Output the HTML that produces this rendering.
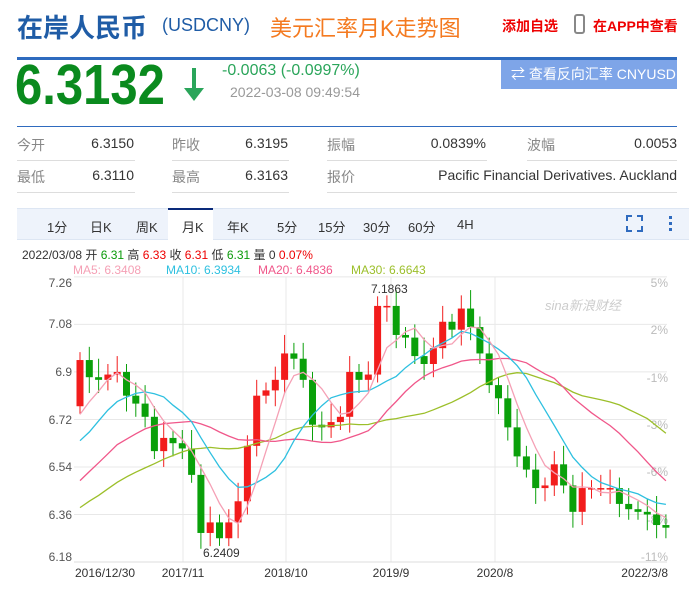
<!DOCTYPE html>
<html><head><meta charset="utf-8">
<style>
*{margin:0;padding:0;box-sizing:border-box}
body{width:689px;height:603px;background:#fff;position:relative;overflow:hidden;font-family:"Liberation Sans","Noto Sans CJK SC",sans-serif}
.a{position:absolute;white-space:nowrap}
.lbl{color:#888;font-size:14px}
.val{color:#333;font-size:14px;text-align:right}
.ul{position:absolute;height:1px;background:#ddd}
.tab{position:absolute;top:217px;font-size:13px;color:#333}
</style></head><body>
<div class="a" style="left:17px;top:8px;font-size:26px;font-weight:bold;color:#1f5ca6">在岸人民币</div>
<div class="a" style="left:162px;top:15px;font-size:18px;color:#1f5ca6">(USDCNY)</div>
<div class="a" style="left:270px;top:11px;font-size:22px;color:#f47a20">美元汇率月K走势图</div>
<div class="a" style="left:502px;top:16px;font-size:14px;font-weight:bold;color:#e00">添加自选</div>
<div class="a" style="left:574px;top:14px;width:11px;height:20px;border:2px solid #888;border-radius:3px"></div>
<div class="a" style="left:593px;top:16px;font-size:14px;font-weight:bold;color:#e00">在APP中查看</div>
<div class="a" style="left:17px;top:57px;width:660px;height:3px;background:#2f6bbf"></div>

<div class="a" style="left:15px;top:52px;font-size:57px;font-weight:bold;color:#0a8a1e;transform:scaleX(0.86);transform-origin:0 0">6.3132</div>
<svg class="a" style="left:182px;top:66px" width="24" height="38"><path d="M12 2V32" stroke="#2aa55a" stroke-width="4"/><path d="M2 22L12 35L22 22Z" fill="#2aa55a"/></svg>
<div class="a" style="left:222px;top:62px;font-size:16px;color:#2aa55a">-0.0063 (-0.0997%)</div>
<div class="a" style="left:230px;top:84px;font-size:14px;color:#999">2022-03-08 09:49:54</div>
<div class="a" style="left:501px;top:60px;width:176px;height:29px;background:#7ea5e8;color:#fff;font-size:14px;line-height:29px;padding-left:10px">⇄ 查看反向汇率 CNYUSD</div>

<div class="a" style="left:17px;top:126px;width:660px;height:1px;background:#2f6bbf"></div>
<div class="a lbl" style="left:17px;top:135px">今开</div><div class="a val" style="left:60px;width:74px;top:135px">6.3150</div>
<div class="a lbl" style="left:172px;top:135px">昨收</div><div class="a val" style="left:214px;width:74px;top:135px">6.3195</div>
<div class="a lbl" style="left:327px;top:135px">振幅</div><div class="a val" style="left:400px;width:86px;top:135px">0.0839%</div>
<div class="a lbl" style="left:527px;top:135px">波幅</div><div class="a val" style="left:600px;width:77px;top:135px">0.0053</div>
<div class="ul" style="left:17px;top:160px;width:118px"></div><div class="ul" style="left:172px;top:160px;width:117px"></div><div class="ul" style="left:327px;top:160px;width:160px"></div><div class="ul" style="left:527px;top:160px;width:150px"></div>
<div class="a lbl" style="left:17px;top:167px">最低</div><div class="a val" style="left:60px;width:74px;top:167px">6.3110</div>
<div class="a lbl" style="left:172px;top:167px">最高</div><div class="a val" style="left:214px;width:74px;top:167px">6.3163</div>
<div class="a lbl" style="left:327px;top:167px">报价</div><div class="a val" style="left:400px;width:277px;top:167px">Pacific Financial Derivatives. Auckland</div>
<div class="ul" style="left:17px;top:192px;width:118px"></div><div class="ul" style="left:172px;top:192px;width:117px"></div><div class="ul" style="left:327px;top:192px;width:350px"></div>

<div class="a" style="left:17px;top:208px;width:672px;height:32px;background:#eef3fb;border-top:1px solid #dde6f3;border-bottom:1px solid #dde6f3"></div>
<div class="a" style="left:168px;top:208px;width:45px;height:33px;background:#fff;border-top:2px solid #0a2a7a"></div>
<div class="tab" style="left:47px">1分</div><div class="tab" style="left:90px">日K</div><div class="tab" style="left:136px">周K</div><div class="tab" style="left:182px">月K</div><div class="tab" style="left:227px">年K</div><div class="tab" style="left:277px">5分</div><div class="tab" style="left:318px">15分</div><div class="tab" style="left:363px">30分</div><div class="tab" style="left:408px">60分</div><div class="tab" style="left:457px">4H</div>
<svg class="a" style="left:626px;top:215px" width="50" height="18"><g stroke="#2f6bbf" stroke-width="2" fill="none"><path d="M1 6V1H6M11 1H16V6M16 11V16H11M6 16H1V11"/></g><g fill="#2f6bbf"><rect x="43" y="1" width="3" height="3"/><rect x="43" y="7" width="3" height="3"/><rect x="43" y="13" width="3" height="3"/></g></svg>

<div class="a" style="left:22px;top:246px;font-size:12px;color:#333">2022/03/08 开 <span style="color:#0a9a0a">6.31</span> 高 <span style="color:#e00">6.33</span> 收 <span style="color:#e00">6.31</span> 低 <span style="color:#0a9a0a">6.31</span> 量 0 <span style="color:#e00">0.07%</span></div>
<div class="a" style="left:73px;top:263px;font-size:12px;color:#f5a0b5">MA5: 6.3408</div>
<div class="a" style="left:166px;top:263px;font-size:12px;color:#2ec0e0">MA10: 6.3934</div>
<div class="a" style="left:258px;top:263px;font-size:12px;color:#f0578a">MA20: 6.4836</div>
<div class="a" style="left:351px;top:263px;font-size:12px;color:#9cbf2a">MA30: 6.6643</div>

<svg id="c" class="a" style="left:0;top:270px" width="689" height="333"></svg>
<script>
var hist=[6.15,6.16,6.21,6.14,6.16,6.20,6.24,6.24,6.12,6.14,6.21,6.20,6.20,6.21,6.21,6.39,6.37,6.36,6.37,6.49,6.57,6.55,6.45,6.48,6.58,6.64,6.64,6.67,6.67,6.77,6.89];
var cl=[6.945,6.88,6.87,6.89,6.90,6.81,6.78,6.73,6.60,6.65,6.63,6.61,6.51,6.29,6.33,6.27,6.33,6.41,6.62,6.81,6.83,6.87,6.97,6.95,6.87,6.70,6.69,6.71,6.73,6.90,6.87,6.89,7.15,7.15,7.04,7.03,6.96,6.93,6.99,7.09,7.06,7.14,7.07,6.97,6.85,6.80,6.69,6.58,6.53,6.46,6.47,6.55,6.47,6.37,6.46,6.46,6.46,6.46,6.40,6.38,6.37,6.36,6.32,6.31];
var all=hist.slice(0,hist.length-1).concat(cl);var off=all.length-cl.length;
function Y(v){return 292-(v-6.18)*264}
function X(i){return 80+i*9.3}
var s='';
[7.26,7.08,6.9,6.72,6.54,6.36].forEach(function(v){s+='<line x1="74" x2="667" y1="'+Y(v)+'" y2="'+Y(v)+'" stroke="#e8e8e8"/>'});
[183,286,391,495].forEach(function(x){s+='<line x1="'+x+'" x2="'+x+'" y1="7" y2="292" stroke="#e8e8e8"/>'});
s+='<line x1="74" x2="667" y1="292" y2="292" stroke="#ddd"/>';
var lv=[['7.26',13],['7.08',54],['6.9',102],['6.72',150],['6.54',197],['6.36',245],['6.18',287]];
lv.forEach(function(a){s+='<text x="72" y="'+(a[1]+4)+'" text-anchor="end" font-size="12" fill="#555">'+a[0]+'</text>'});
var rv=[['5%',13],['2%',60],['-1%',108],['-3%',155],['-6%',202],['-8%',250],['-11%',287]];
rv.forEach(function(a){s+='<text x="668" y="'+(a[1]+4)+'" text-anchor="end" font-size="12" fill="#bbb">'+a[0]+'</text>'});
for(var i=0;i<cl.length;i++){var o=all[off+i-1],c=cl[i];var up=c>=o;var hi=Math.max(o,c)+0.03+((i*7)%5)*0.01,lo=Math.min(o,c)-0.03-((i*3)%4)*0.01;
if(i==32)hi=7.1863;if(i==15)lo=6.2409;
var col=up?'#f21c1c':'#0aa00a';var x=X(i);
s+='<line x1="'+x+'" x2="'+x+'" y1="'+Y(hi)+'" y2="'+Y(lo)+'" stroke="'+col+'"/>';
var t=Y(Math.max(o,c)),b=Y(Math.min(o,c));s+='<rect x="'+(x-3.5)+'" y="'+t+'" width="7" height="'+Math.max(1.5,b-t)+'" fill="'+col+'"/>';}
function ma(n,col){var p=[];for(var i=0;i<cl.length;i++){var k=off+i,sum=0;for(var j=0;j<n;j++){sum+=all[Math.max(0,k-j)]}p.push(X(i).toFixed(1)+','+Y(sum/n).toFixed(1))}s+='<polyline points="'+p.join(' ')+'" fill="none" stroke="'+col+'" stroke-width="1.3"/>'}
ma(30,'#9cbf2a');ma(20,'#f0578a');ma(10,'#2ec0e0');ma(5,'#f5a0b5');
s+='<text x="371" y="23" font-size="12" fill="#333">7.1863</text><text x="203" y="287" font-size="12" fill="#333">6.2409</text>';
s+='<text x="545" y="40" font-size="13" fill="#ccc" font-style="italic">sina新浪财经</text>';
[['2016/12/30',75,'start'],['2017/11',183,'middle'],['2018/10',286,'middle'],['2019/9',391,'middle'],['2020/8',495,'middle'],['2022/3/8',668,'end']].forEach(function(a){s+='<text x="'+a[1]+'" y="307" font-size="12" fill="#333" text-anchor="'+a[2]+'">'+a[0]+'</text>'});
document.getElementById('c').innerHTML=s;
</script>
</body></html>
